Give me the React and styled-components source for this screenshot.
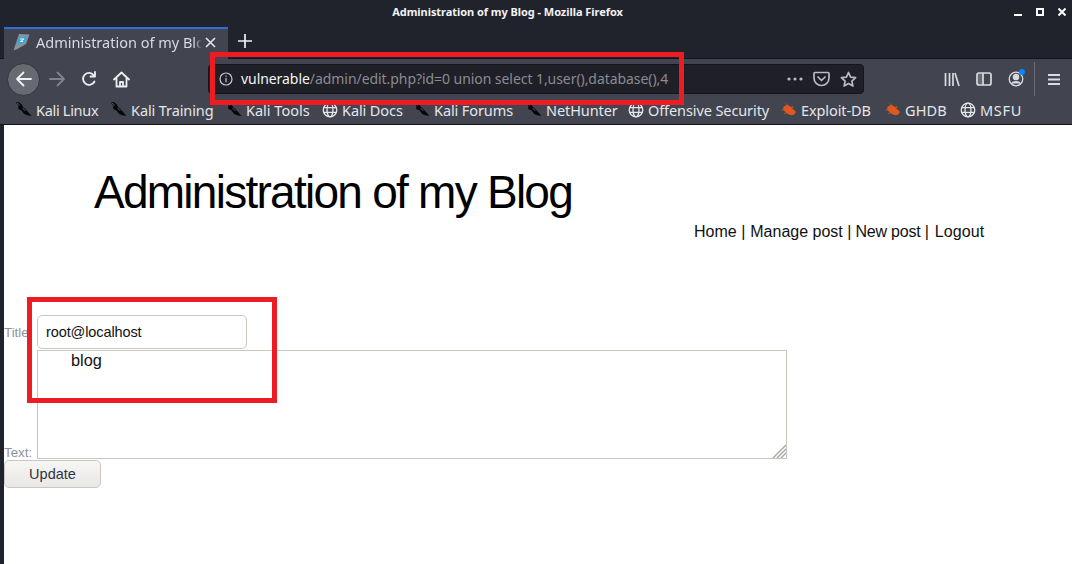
import React from "react";
import styled, { createGlobalStyle } from "styled-components";

const Global = createGlobalStyle`
  html, body { margin: 0; padding: 0; width: 1072px; height: 564px; overflow: hidden; background: #fff; }
  * { box-sizing: border-box; }
`;
const Page = styled.div`
  width: 1072px; height: 564px; position: relative; overflow: hidden;
  display: flex; flex-direction: column; font-family: "Liberation Sans", Arial, sans-serif;
`;
const TitleBar = styled.div`
  height: 27px; background: #20222c; position: relative; display: flex; justify-content: center; align-items: center;
  color: #f2f3f5; font: 700 11px "Noto Sans", sans-serif; padding: 0 57px 4px 0; letter-spacing: -0.05px;
`;
const WinButtons = styled.div`
  position: absolute; right: 6px; top: 8px; display: flex; gap: 14px; align-items: center; color: #fff;
`;
const TabBar = styled.div`
  height: 32px; background: #20222c; display: flex; align-items: stretch; padding-left: 4px;
`;
const Tab = styled.div`
  width: 224px; background: #42454f; border-top: 2px solid #2a70d8; display: flex; align-items: center;
  padding: 0 12px 4px 9px; color: #d7dae2; font: 400 14.5px "Noto Sans", sans-serif; gap: 6px;
`;
const TabTitle = styled.span`
  flex: 1; white-space: nowrap; overflow: hidden; margin-right: -3px;
  mask-image: linear-gradient(to left, transparent 0, #000 8px);
`;
const NewTab = styled.div`
  width: 34px; display: flex; align-items: center; justify-content: center; color: #f0f1f4; padding-bottom: 4px;
`;
const NavBar = styled.div`
  height: 37px; background: #42454f; border-top: 1px solid #14151a; margin-top: -1px; display: flex; align-items: center;
  position: relative; padding-top: 4px;
`;
const TabJoin = styled.div`
  position: absolute; left: 4px; top: -1px; width: 224px; height: 1px; background: #42454f;
`;
const Back = styled.div`
  width: 33px; height: 33px; border-radius: 50%; background: #686a72; border: 1px solid #33353c; margin: 0 1px 0 7px;
  display: flex; align-items: center; justify-content: center; color: #f0f1f4;
`;
const NavIcon = styled.div`
  width: 32px; display: flex; justify-content: center; color: ${p => p.$dim ? "#81838a" : "#eceef2"};
`;
const UrlBar = styled.div`
  position: absolute; left: 208px; top: 5px; width: 656px; height: 30px; background: #1e1f27; border: 1px solid #14151a;
  border-radius: 4px; display: flex; align-items: center; padding: 0 6px 0 10px; color: #d5d7dc;
`;
const UrlText = styled.div`
  margin-left: 8px; flex: 1; font: 400 14px "Noto Sans", sans-serif; color: #8a8c92; white-space: nowrap; letter-spacing: -0.06px; padding-bottom: 2px;
`;
const Host = styled.span` color: #f4f5f7; `;
const UrlIcons = styled.div` display: flex; align-items: center; gap: 10px; color: #b9bbc1; `;
const RightIcons = styled.div`
  position: absolute; left: 936px; top: 4px; height: 32px; width: 136px; display: flex; align-items: center; color: #d9dbe0;
`;
const RIcon = styled.div` width: 32px; display: flex; justify-content: center; position: relative; `;
const Dot = styled.span`
  position: absolute; top: -2px; right: 7px; width: 6px; height: 6px; border-radius: 50%; background: #0a84ff;
`;
const Sep = styled.div` width: 1px; height: 34px; background: #6a6d75; margin: 0 3px 0 2px; `;
const Bookmarks = styled.div`
  height: 30px; background: #42454f; border-bottom: 1px solid #14151a; display: flex; align-items: center; padding: 0 0 0 15px;
  color: #e4e6ea; font: 400 14.5px "Noto Sans", sans-serif; white-space: nowrap; letter-spacing: -0.1px;
`;
const Mark = styled.div`
  width: ${p => p.$w}px; flex: none; display: flex; align-items: center; gap: 4px; letter-spacing: ${p => p.$track}px;
`;
const MarkIcon = styled.span` width: 17px; flex: none; display: flex; justify-content: center; `;
const Content = styled.div`
  flex: 1; display: flex; background: #fff; min-height: 0;
`;
const Edge = styled.div` width: 4px; background: #20222c; `;
const Main = styled.div` flex: 1; display: flex; flex-direction: column; position: relative; min-width: 0; `;
const Heading = styled.h1`
  margin: 40px 0 0 90px; font: 400 46px/54px "Liberation Sans", sans-serif; color: #000; letter-spacing: -1.74px;
`;
const Menu = styled.div`
  margin: 3px 0 0 690px; display: flex; font-size: 16px; line-height: 20px; color: #111; white-space: nowrap;
`;
const MenuItem = styled.a`
  color: #111; margin-right: ${p => p.$gap}px; letter-spacing: ${p => p.$track || 0}px;
`;
const Form = styled.form` margin-top: 73px; display: flex; flex-direction: column; align-items: flex-start; `;
const Row = styled.div` display: flex; align-items: flex-end; `;
const Label = styled.label`
  width: 33px; color: #8f929b; font-size: 13.33px; line-height: 15px; white-space: nowrap; overflow: visible;
  align-self: ${p => p.$center ? "center" : "flex-end"}; margin-bottom: ${p => p.$center ? 0 : -1}px;
`;
const Input = styled.div`
  width: 210px; height: 34px; border: 1px solid #cbc7c1; border-radius: 5px; padding: 0 8px 1px; display: flex; align-items: center;
  font-size: 14.5px; color: #111; background: #fff; letter-spacing: -0.1px;
`;
const Area = styled.div`
  width: 750px; height: 109px; margin-top: 1px; border: 1px solid #c9c5bf; font-size: 16.3px; line-height: 19px; padding: 0 0 0 33px; color: #111; position: relative;
`;
const Grip = styled.svg` position: absolute; right: 0; bottom: 0; `;
const Button = styled.div`
  width: 97px; height: 28px; margin-top: 1px; border: 1px solid #cbc7c1; border-radius: 5px; padding-bottom: 1px;
  background: linear-gradient(#f7f6f5, #e9e8e6); color: #2e3440; font-size: 14.5px; display: flex; align-items: center; justify-content: center;
`;
const Highlight = styled.div`
  position: absolute; border: 5px solid #ed1c24; pointer-events: none;
  left: ${p => p.$x}px; top: ${p => p.$y}px; width: ${p => p.$w}px; height: ${p => p.$h}px;
`;

const Dragon = () => (
  <svg width="18" height="17" viewBox="0 0 18 17">
    <path d="M0.5 1 L4 0.5 L7 3 L8.5 6 L11 8 L13.5 11 L17.5 15.5 L13 14.5 L9.5 13 L7 9.5 L3.5 8 L3.5 4 Z" fill="#050505" />
    <path d="M2 1.5 L5 4 M8 7 L11 10" stroke="#8a8c92" strokeWidth="0.7" />
  </svg>
);
const Globe = () => (
  <svg width="16" height="16" viewBox="0 0 16 16" fill="none" stroke="#e4e6ea" strokeWidth="1.3">
    <circle cx="8" cy="8" r="6.8" />
    <ellipse cx="8" cy="8" rx="3" ry="6.8" />
    <path d="M1.5 5.6h13M1.5 10.4h13" />
  </svg>
);
const Bug = () => (
  <svg width="16" height="13" viewBox="0 0 16 13">
    <path d="M2 5 C3 2 7 1 10 4 L15 9 L12.5 12 C8 12.5 3.5 10 2 5 Z" fill="#e2571e" />
    <path d="M0.5 7 L4 7 M3 11 L6 9 M5 0.5 L7 3 M11 3 L12 5" stroke="#c8632c" strokeWidth="1" opacity=".8" />
  </svg>
);
const Stroke = { fill: "none", stroke: "currentColor", strokeWidth: 1.8, strokeLinecap: "round", strokeLinejoin: "round" };

const marks = [
  ["Kali Linux", Dragon, 95, -0.3], ["Kali Training", Dragon, 115, -0.1], ["Kali Tools", Dragon, 96, 0], ["Kali Docs", Globe, 92, -0.1],
  ["Kali Forums", Dragon, 112, -0.1], ["NetHunter", Dragon, 102, -0.1], ["Offensive Security", Globe, 153, -0.1], ["Exploit-DB", Bug, 104, -0.1],
  ["GHDB", Bug, 75, 0.1], ["MSFU", Globe, 80, 0.7],
];

export default function App() {
  return (
    <Page>
      <Global />
      <TitleBar>
        Administration of my Blog - Mozilla Firefox
        <WinButtons>
          <svg width="8" height="8" viewBox="0 0 8 8"><path d="M0 7h8" stroke="#fff" strokeWidth="2" /></svg>
          <svg width="8" height="8" viewBox="0 0 8 8"><rect x="1" y="1" width="6" height="6" fill="none" stroke="#fff" strokeWidth="2" /></svg>
          <svg width="8" height="8" viewBox="0 0 8 8"><path d="M.5.5l7 7M7.5.5l-7 7" stroke="#fff" strokeWidth="2" /></svg>
        </WinButtons>
      </TitleBar>
      <TabBar>
        <Tab>
          <svg width="17" height="18" viewBox="0 0 17 18">
            <path d="M16.5 1.5 L6 1 L2 13 L0.5 17.5 L4.5 16 L13 11 Z" fill="#8b929c" />
            <path d="M14 4 L6 4 L3.5 12 L12 9.5 Z" fill="#35a7db" />
            <path d="M7 6 H11 L7.5 8.5 H10" stroke="#e8f6fc" strokeWidth="1" fill="none" />
          </svg>
          <TabTitle>Administration of my Blog</TabTitle>
          <svg width="11" height="11" viewBox="0 0 11 11"><path d="M1 1l9 9M10 1l-9 9" stroke="#e4e6ea" strokeWidth="1.6" /></svg>
        </Tab>
        <NewTab>
          <svg width="14" height="14" viewBox="0 0 14 14"><path d="M7 0v14M0 7h14" stroke="currentColor" strokeWidth="1.7" /></svg>
        </NewTab>
      </TabBar>
      <NavBar>
        <TabJoin />
        <Back>
          <svg width="18" height="18" viewBox="0 0 18 18" {...Stroke}><path d="M16 9H2M8.5 2.5 2 9l6.5 6.5" /></svg>
        </Back>
        <NavIcon $dim>
          <svg width="18" height="18" viewBox="0 0 18 18" {...Stroke}><path d="M2 9h14M9.5 2.5 16 9l-6.5 6.5" /></svg>
        </NavIcon>
        <NavIcon>
          <svg width="16" height="16" viewBox="0 0 16 16" {...Stroke}><path d="M13.5 10.5A6 6 0 1 1 13 4.5M14 1v4.5H9.5" /></svg>
        </NavIcon>
        <NavIcon>
          <svg width="17" height="17" viewBox="0 0 17 17" {...Stroke}><path d="M1 8.5 8.5 1.5 16 8.5M3.5 7v8.5h10V7M7 15.5V11h3v4.5" /></svg>
        </NavIcon>
        <UrlBar>
          <svg width="14" height="14" viewBox="0 0 14 14" fill="none" stroke="#c6c8cd" strokeWidth="1.2">
            <circle cx="7" cy="7" r="6" /><path d="M7 6v4.2M7 3.4v1.4" />
          </svg>
          <UrlText><Host>vulnerable</Host>/admin/edit.php?id=0 union select 1,user(),database(),4</UrlText>
          <UrlIcons>
            <svg width="16" height="4" viewBox="0 0 16 4" fill="currentColor"><circle cx="2" cy="2" r="1.6" /><circle cx="8" cy="2" r="1.6" /><circle cx="14" cy="2" r="1.6" /></svg>
            <svg width="17" height="16" viewBox="0 0 17 16" fill="none" stroke="currentColor" strokeWidth="1.7" strokeLinecap="round" strokeLinejoin="round">
              <path d="M2 1.5h13a1 1 0 0 1 1 1V7a7.5 7.5 0 0 1-15 0V2.5a1 1 0 0 1 1-1z" /><path d="M5 6l3.5 3.5L12 6" />
            </svg>
            <svg width="17" height="17" viewBox="0 0 17 17" fill="none" stroke="currentColor" strokeWidth="1.7" strokeLinejoin="round">
              <path d="M8.5 1.5l2.1 4.6 5 .6-3.7 3.4 1 5-4.4-2.5-4.4 2.5 1-5L1.4 6.7l5-.6z" />
            </svg>
          </UrlIcons>
        </UrlBar>
        <RightIcons>
          <RIcon>
            <svg width="16" height="15" viewBox="0 0 16 15" stroke="currentColor" strokeWidth="1.7" fill="none"><path d="M1.5 1v13M5.5 1v13M9 1v13M11 1l4 13" /></svg>
          </RIcon>
          <RIcon>
            <svg width="16" height="14" viewBox="0 0 16 14" fill="none" stroke="currentColor" strokeWidth="1.7"><rect x="1" y="1" width="14" height="12" rx="2" /><path d="M7 1v12" /><path d="M2 2h5v10H2z" fill="currentColor" stroke="none" opacity=".25" /></svg>
          </RIcon>
          <RIcon>
            <svg width="16" height="16" viewBox="0 0 16 16" fill="none" stroke="currentColor" strokeWidth="1.3"><circle cx="8" cy="8" r="6.8" /><circle cx="8" cy="6" r="2.6" fill="currentColor" /><path d="M3.5 12.5c1.5-2.5 7.5-2.5 9 0" fill="currentColor" /></svg>
            <Dot />
          </RIcon>
          <Sep />
          <RIcon>
            <svg width="14" height="13" viewBox="0 0 14 13" stroke="currentColor" strokeWidth="1.8"><path d="M1 2h12M1 6.5h12M1 11h12" /></svg>
          </RIcon>
        </RightIcons>
      </NavBar>
      <Bookmarks>
        {marks.map(([t, I, w, track]) => <Mark key={t} $w={w} $track={track}><MarkIcon><I /></MarkIcon>{t}</Mark>)}
      </Bookmarks>
      <Content>
        <Edge />
        <Main>
          <Heading>Administration of my Blog</Heading>
          <Menu>
            <MenuItem $gap={5}>Home |</MenuItem>
            <MenuItem $gap={4}>Manage post |</MenuItem>
            <MenuItem $gap={6} $track={-0.2}>New post |</MenuItem>
            <MenuItem $gap={0} $track={0.1}>Logout</MenuItem>
          </Menu>
          <Form>
            <Row>
              <Label $center>Title</Label>
              <Input>root@localhost</Input>
            </Row>
            <Row>
              <Label>Text:</Label>
              <Area>
                blog
                <Grip width="14" height="14" viewBox="0 0 14 14" stroke="#a9a69f" strokeWidth="1.4">
                  <path d="M1 14 14 1M5 14 14 5M9 14l5-5" />
                </Grip>
              </Area>
            </Row>
            <Button>Update</Button>
          </Form>
        </Main>
      </Content>
      <Highlight $x={210} $y={52} $w={474} $h={53} />
      <Highlight $x={27} $y={297} $w={250} $h={106} />
    </Page>
  );
}
